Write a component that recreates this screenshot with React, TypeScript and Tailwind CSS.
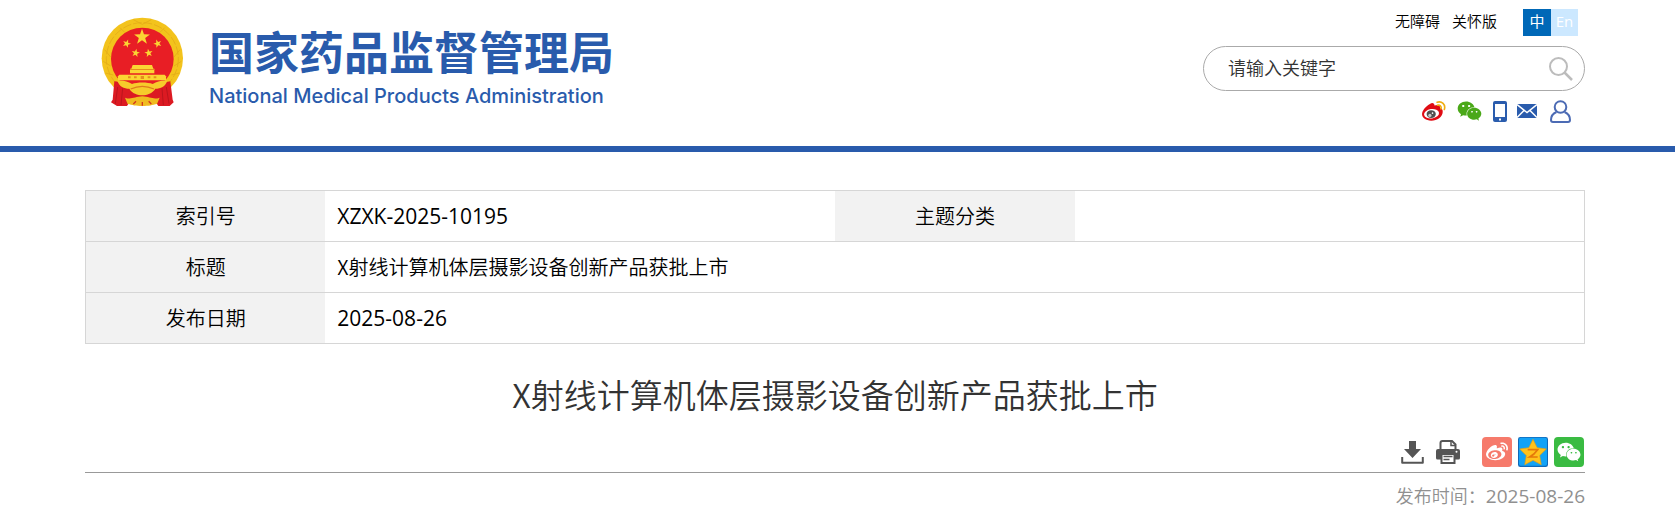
import React from "react";
import { FaWeibo, FaWeixin } from "react-icons/fa";

const starPath = (cx: number, cy: number, r: number, inner = 0.4, turn = -90) =>
  Array.from({ length: 10 }, (_, i) => {
    const radius = i % 2 === 0 ? r : r * inner;
    const angle = ((turn + i * 36) * Math.PI) / 180;
    return `${(cx + radius * Math.cos(angle)).toFixed(1)},${(cy + radius * Math.sin(angle)).toFixed(1)}`;
  }).join(" ");

function Emblem() {
  return (
    <svg viewBox="63 52 246 270" className="h-[90px] w-[82px]" aria-hidden="true">
      <circle cx="187" cy="176" r="122" fill="#f3c31c" />
      <g fill="none" stroke="#e3ac18" strokeWidth="2.5">
        <circle cx="187" cy="177" r="108" strokeDasharray="26 6" />
        <path d="M74 150l18 22M70 185l22 14M76 220l24 6M300 150l-18 22M304 185l-22 14M298 220l-24 6M120 84l14 14M254 84l-14 14M160 60l27 14 27-14" />
      </g>
      <circle cx="187" cy="178" r="94" fill="#e81e25" />
      <g fill="#fbd533">
        <polygon points={starPath(186, 112, 25)} />
        <polygon points={starPath(140, 132, 13, 0.4, -70)} />
        <polygon points={starPath(233, 132, 13, 0.4, -110)} />
        <polygon points={starPath(167, 160, 13, 0.4, -80)} />
        <polygon points={starPath(206, 160, 13, 0.4, -100)} />
        <path d="M158 196h58l4 11h3v14h-73v-14h4z" />
        <path d="M118 225h136l4 5v12H114v-12z" />
      </g>
      <g fill="#e58e1d">
        <path d="M150 208h73v3h-73zM144 230h8v6h-8zM162 230h8v6h-8zM182 229h10v9h-10zM203 230h8v6h-8zM221 230h8v6h-8z" />
      </g>
      <path d="M103 245c20 2 30 8 42 10l42 14 42-14c14-2 25-8 42-10l7 55 3 8-12 11h-34l-8-12h-78l-8 12h-30l-18-11 5-8z" fill="#dc1a22" />
      <path d="M113 262l-7 50M128 266l-5 50M259 262l8 50M246 266l4 50" stroke="#b3141c" strokeWidth="2.500" fill="none" />
      <path d="M112 243c20-2 30 3 44 10 15-6 47-6 62 0 14-7 26-12 44-10-6 18-20 24-36 24-9 14-25 20-39 20s-31-6-39-20c-16 0-30-6-36-24z" fill="#f6cb2b" />
      <path d="M152 268q35 -16 70 0" fill="none" stroke="#e07a1c" strokeWidth="4" />
      <path d="M135 294c19 7 29-3 52-4 23 1 33 11 52 4l-8 19c-14 3-24 6-44 6s-30-3-44-6z" fill="#f0bb20" />
      <path d="M168 305l-8 8M187 307v11M206 305l8 8" stroke="#d3371d" strokeWidth="4" fill="none" />
    </svg>
  );
}

function WeiboColor() {
  return (
    <svg viewBox="35 31 73 61" className="h-5 w-6" aria-hidden="true">
      <path d="M59 40c7-5 14-3 14 5 9-3 19-2 17 7 6 2 9 6 8 13-1 14-16 26-35 26-16 0-28-8-28-20 0-10 10-23 24-31z" fill="#e00b13" />
      <ellipse cx="64" cy="70" rx="23" ry="14.500" transform="rotate(-8 64 70)" fill="#fff" />
      <ellipse cx="63" cy="71" rx="14" ry="12" fill="#505050" />
      <circle cx="59" cy="75" r="5" fill="#c9c9c9" />
      <circle cx="67" cy="68" r="2.500" fill="#fff" />
      <path d="M81 35c14-5 27 7 22 22M82 44c7-2 13 3 11 11" fill="none" stroke="#efae12" strokeWidth="5" strokeLinecap="round" />
    </svg>
  );
}

function PhoneIcon() {
  return (
    <svg viewBox="0 0 14 21" className="h-[21px] w-3.5" aria-hidden="true">
      <path fillRule="evenodd" fill="#2a5cad" d="M2 0h10q2 0 2 2v17q0 2-2 2H2q-2 0-2-2V2q0-2 2-2zm0 3v13h10V3zm4 14.500v2h2v-2z" />
    </svg>
  );
}

function MailIcon() {
  return (
    <svg viewBox="0 0 20 14" className="h-3.5 w-5" aria-hidden="true">
      <path d="M0 0h20v14H0z" fill="#2a5cad" />
      <path d="M0 .5l10 8 10-8M0 13.500l7-7M20 13.500l-7-7" fill="none" stroke="#fff" strokeWidth="1.500" />
    </svg>
  );
}

function PersonIcon() {
  return (
    <svg viewBox="0 0 21 23" className="h-[23px] w-[21px]" fill="none" stroke="#4c6bb4" strokeWidth="2" aria-hidden="true">
      <circle cx="10.500" cy="7" r="5.800" />
      <path d="M6.500 12C3 13.500 1 16.500 1 20q0 2 2 2h15q2 0 2-2c0-3.500-2-6.500-5.500-8" />
    </svg>
  );
}

function SearchIcon() {
  return (
    <svg viewBox="0 0 24 24" className="size-6" fill="none" stroke="#bcbcbc" strokeWidth="2" aria-hidden="true">
      <circle cx="9.500" cy="9.500" r="8.500" />
      <path d="M15.500 15.500L23 23" strokeWidth="2.500" />
    </svg>
  );
}

function DownloadIcon() {
  return (
    <svg viewBox="0 0 23 23" className="size-[23px]" aria-hidden="true">
      <path d="M8 0h7v8h5l-8.500 9L3 8h5z" fill="#555" />
      <path d="M1.200 16v5.800h20.600V16" fill="none" stroke="#555" strokeWidth="2" strokeLinejoin="round" />
    </svg>
  );
}

function PrinterIcon() {
  return (
    <svg viewBox="0 0 24 24" className="size-6" aria-hidden="true">
      <path d="M4.500 9V3q0-2 2-2h9.500l3.500 3.500V9" fill="#fff" stroke="#555" strokeWidth="2" />
      <path d="M15 1v4.500h4.500" fill="none" stroke="#555" strokeWidth="1.500" />
      <path d="M2 9h20q2 0 2 2v7q0 1.500-1.500 1.500h-21Q0 19.500 0 18v-7q0-2 2-2z" fill="#555" />
      <circle cx="20.500" cy="11.700" r="1" fill="#fff" />
      <path d="M5.500 14h13v9h-13z" fill="#fff" stroke="#555" strokeWidth="2" />
      <path d="M7.500 16.500h9M7.500 19.500h6" stroke="#555" strokeWidth="1.500" />
    </svg>
  );
}

function QzoneIcon() {
  return (
    <svg viewBox="384 36 90 90" className="size-[30px]" aria-hidden="true">
      <rect x="384" y="36" width="90" height="90" rx="7" fill="#1268b8" />
      <rect x="387" y="38" width="84" height="84" rx="5" fill="#12a2f6" />
      <polygon points={starPath(429, 85, 42, 0.5)} fill="#ffc21c" stroke="#e9a010" strokeWidth="2" strokeLinejoin="round" />
      <path d="M413 74h30q-10 14-24 22h24" fill="none" stroke="#e5780a" strokeWidth="5" />
    </svg>
  );
}

const labelCell = "w-[16%] bg-[#f2f2f2] text-center font-[350]";
const valueCell = "px-3 text-left";
const digits = "font-['Open_Sans','Noto_Sans_CJK_SC',sans-serif] text-[21px]";

export default function App() {
  return (
    <div className="bg-white pr-[5px] font-['Noto_Sans_CJK_SC',sans-serif] text-black">
      <header className="-mr-[5px] border-b-6 border-[#295bac] pr-[5px]">
        <div className="mx-auto flex h-[146px] max-w-[1500px] items-start justify-between">
          <a href="#home" className="flex items-start pt-[17px] pl-4 text-[#295bac]">
            <Emblem />
            <span className="block pt-1 pl-[26px]">
              <span className="block text-[45px] leading-[60px] font-bold whitespace-nowrap">国家药品监督管理局</span>
              <span className="mt-px block font-['Inter',sans-serif] text-[20px] leading-7 font-medium whitespace-nowrap">
                National Medical Products Administration
              </span>
            </span>
          </a>

          <div className="flex w-[382px] flex-col items-end pt-[9px]">
            <nav className="flex items-start pr-[7px] text-[15px] leading-[27px]">
              <a href="#accessible" className="mr-3 leading-6 font-[350]">无障碍</a>
              <a href="#care" className="mr-[26px] leading-6 font-[350]">关怀版</a>
              <a href="#zh" className="h-[27px] w-7 bg-[#0068b7] text-center leading-6 text-white">中</a>
              <a href="#en" className="h-[27px] w-[27px] bg-[#cce8ff] text-center font-['Open_Sans',sans-serif] leading-6 text-white">En</a>
            </nav>
            <form className="mt-2.5 flex h-[45px] w-full items-center rounded-full border border-[#aaa] pr-[11px] pl-6" onSubmit={(e) => e.preventDefault()}>
              <input aria-label="请输入关键字" placeholder="请输入关键字" className="min-w-0 flex-1 pb-1 text-[18px] leading-6 font-[350] outline-none placeholder:text-[#333]" />
              <button type="submit" aria-label="搜索"><SearchIcon /></button>
            </form>
            <div className="mt-2 flex h-6 items-center pr-3.5">
              <a href="#weibo" aria-label="微博" className="mr-[11px]"><WeiboColor /></a>
              <a href="#weixin" aria-label="微信" className="mr-[11px]"><FaWeixin className="h-[22px] w-[25px] text-[#4aa818]" /></a>
              <a href="#mobile" aria-label="手机版" className="mr-2.5"><PhoneIcon /></a>
              <a href="#mail" aria-label="邮箱" className="mr-[13px]"><MailIcon /></a>
              <a href="#user" aria-label="个人中心"><PersonIcon /></a>
            </div>
          </div>
        </div>
      </header>

      <main className="mx-auto max-w-[1500px] pt-[38px]">
        <table className="w-full table-fixed border-collapse border border-[#d6d6d6] text-[20px] leading-[30px]">
          <tbody>
            <tr className="h-[51px] border-b border-[#d6d6d6]">
              <th scope="row" className={labelCell}>索引号</th>
              <td className={`${valueCell} ${digits} w-[34%]`}>XZXK-2025-10195</td>
              <th scope="row" className={labelCell}>主题分类</th>
              <td className={valueCell}></td>
            </tr>
            <tr className="h-[51px] border-b border-[#d6d6d6]">
              <th scope="row" className={labelCell}>标题</th>
              <td colSpan={3} className={`${valueCell} font-[350]`}>X射线计算机体层摄影设备创新产品获批上市</td>
            </tr>
            <tr className="h-[51px]">
              <th scope="row" className={labelCell}>发布日期</th>
              <td colSpan={3} className={`${valueCell} ${digits}`}>2025-08-26</td>
            </tr>
          </tbody>
        </table>

        <h1 className="mt-[26px] text-center text-[33px] leading-[48px] font-[350] text-[#333]">X射线计算机体层摄影设备创新产品获批上市</h1>

        <div className="mt-[19px] flex items-center justify-end border-b border-[#999] pr-px pb-[5px]">
          <button type="button" aria-label="下载" className="mr-3"><DownloadIcon /></button>
          <button type="button" aria-label="打印" className="mr-[22px]"><PrinterIcon /></button>
          <div className="flex gap-1.5">
            <a href="#share-weibo" aria-label="分享到微博" className="flex size-[30px] items-center justify-center rounded-sm bg-[#f67a6b] text-white"><FaWeibo className="size-[22px]" /></a>
            <a href="#share-qzone" aria-label="分享到QQ空间"><QzoneIcon /></a>
            <a href="#share-weixin" aria-label="分享到微信" className="flex size-[30px] items-center justify-center rounded-sm bg-[#3abb42] text-white"><FaWeixin className="size-6" /></a>
          </div>
        </div>
        <p className="mt-2 text-right text-[18px] leading-7 font-[350] text-[#909090]">
          发布时间：<time dateTime="2025-08-26" className="font-['Open_Sans',sans-serif] text-[19px] font-normal">2025-08-26</time>
        </p>
      </main>
    </div>
  );
}
